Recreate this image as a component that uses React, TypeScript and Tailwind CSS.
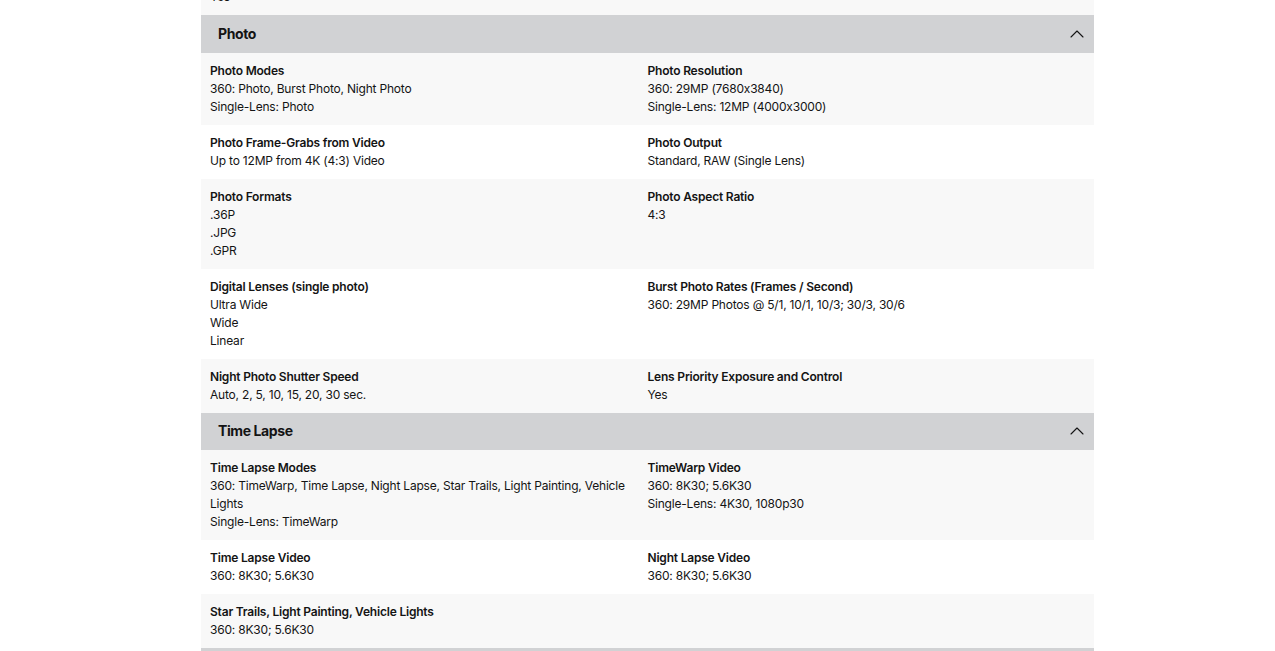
import { ChevronUp } from 'lucide-react';

type Spec = { title: string; lines: string[] };
type Row = [Spec, Spec | null];

const photoRows: Row[] = [
  [
    { title: 'Photo Modes', lines: ['360: Photo, Burst Photo, Night Photo', 'Single-Lens: Photo'] },
    { title: 'Photo Resolution', lines: ['360: 29MP (7680x3840)', 'Single-Lens: 12MP (4000x3000)'] },
  ],
  [
    { title: 'Photo Frame-Grabs from Video', lines: ['Up to 12MP from 4K (4:3) Video'] },
    { title: 'Photo Output', lines: ['Standard, RAW (Single Lens)'] },
  ],
  [
    { title: 'Photo Formats', lines: ['.36P', '.JPG', '.GPR'] },
    { title: 'Photo Aspect Ratio', lines: ['4:3'] },
  ],
  [
    { title: 'Digital Lenses (single photo)', lines: ['Ultra Wide', 'Wide', 'Linear'] },
    { title: 'Burst Photo Rates (Frames / Second)', lines: ['360: 29MP Photos @ 5/1, 10/1, 10/3; 30/3, 30/6'] },
  ],
  [
    { title: 'Night Photo Shutter Speed', lines: ['Auto, 2, 5, 10, 15, 20, 30 sec.'] },
    { title: 'Lens Priority Exposure and Control', lines: ['Yes'] },
  ],
];

const timeLapseRows: Row[] = [
  [
    {
      title: 'Time Lapse Modes',
      lines: ['360: TimeWarp, Time Lapse, Night Lapse, Star Trails, Light Painting, Vehicle Lights', 'Single-Lens: TimeWarp'],
    },
    { title: 'TimeWarp Video', lines: ['360: 8K30; 5.6K30', 'Single-Lens: 4K30, 1080p30'] },
  ],
  [
    { title: 'Time Lapse Video', lines: ['360: 8K30; 5.6K30'] },
    { title: 'Night Lapse Video', lines: ['360: 8K30; 5.6K30'] },
  ],
  [{ title: 'Star Trails, Light Painting, Vehicle Lights', lines: ['360: 8K30; 5.6K30'] }, null],
];

const Cell = ({ spec }: { spec: Spec | null }) => (
  <div className="pr-[10px]">
    {spec && (
      <>
        <div className="font-semibold">{spec.title}</div>
        {spec.lines.map((l) => (
          <div key={l}>{l}</div>
        ))}
      </>
    )}
  </div>
);

const SpecRow = ({ row, index }: { row: Row; index: number }) => (
  <div className={`grid grid-cols-2 px-[9px] py-[9px] ${index % 2 === 0 ? 'bg-[#f8f8f8]' : 'bg-white'}`}>
    <Cell spec={row[0]} />
    <Cell spec={row[1]} />
  </div>
);

const Section = ({ title, rows }: { title: string; rows: Row[] }) => (
  <div>
    <div className="flex h-[37.5px] items-center justify-between bg-[#d1d2d4] pl-[17px] pr-[5px]">
      <span className="text-[14px] font-bold tracking-[-0.4px]">{title}</span>
      <ChevronUp size={24} strokeWidth={1.1} />
    </div>
    {rows.map((r, i) => (
      <SpecRow key={i} row={r} index={i} />
    ))}
  </div>
);

export default function App() {
  return (
    <div
      className="h-[651px] overflow-hidden bg-white text-[12px] leading-[18px] tracking-[-0.2px] text-[#141414]"
      style={{ fontFamily: 'Inter, "Liberation Sans", sans-serif' }}
    >
      <div className="ml-[201px] w-[893px]">
        <div className="mt-[-39px] grid grid-cols-2 bg-[#f8f8f8] px-[9px] py-[9px]">
          <div>
            <div className="font-semibold">Lens Priority</div>
            <div>Yes</div>
          </div>
          <div />
        </div>
        <Section title="Photo" rows={photoRows} />
        <Section title="Time Lapse" rows={timeLapseRows} />
        <div className="h-[38px] bg-[#d1d2d4]" />
      </div>
    </div>
  );
}
